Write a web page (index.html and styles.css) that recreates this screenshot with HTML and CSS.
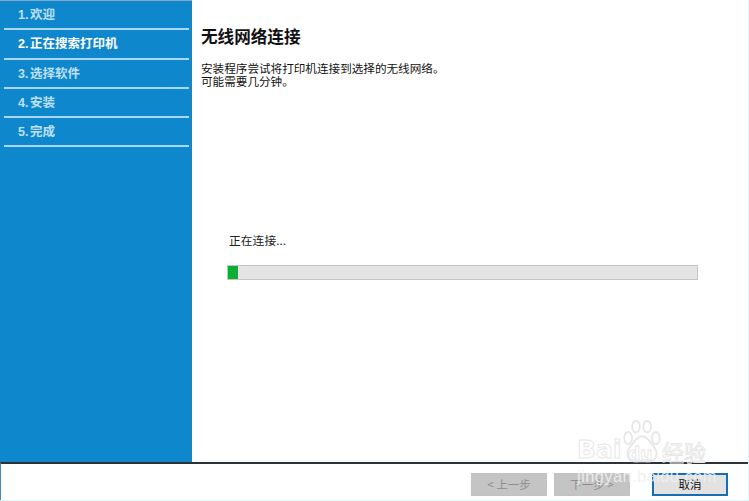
FILE: index.html
```html
<!DOCTYPE html>
<html lang="zh-CN">
<head>
<meta charset="utf-8">
<title>无线网络连接</title>
<link rel="stylesheet" href="styles.css">
</head>
<body>
<div class="window">
  <div class="main">
    <nav class="side">
      <div class="step">1. 欢迎</div>
      <div class="step current">2. 正在搜索打印机</div>
      <div class="step">3. 选择软件</div>
      <div class="step">4. 安装</div>
      <div class="step">5. 完成</div>
    </nav>
    <section class="content">
      <h1 class="title">无线网络连接</h1>
      <p class="desc">安装程序尝试将打印机连接到选择的无线网络。<br>可能需要几分钟。</p>
      <div class="status">正在连接...</div>
      <div class="bar"><div class="fill"></div></div>
    </section>
  </div>
  <footer class="foot">
    <button class="btn off">&lt; 上一步</button>
    <button class="btn off">下一步 &gt;</button>
    <button class="btn primary">取消</button>
  </footer>
  <div class="mark">
    <svg class="paw" width="38" height="44" viewBox="0 0 44 46" preserveAspectRatio="none" aria-hidden="true">
      <g fill="none" stroke="#e6e6e6" stroke-width="2">
        <ellipse cx="6" cy="19" rx="4.5" ry="6.5"/>
        <ellipse cx="15" cy="7" rx="4.5" ry="6"/>
        <ellipse cx="28" cy="7" rx="4.5" ry="6"/>
        <ellipse cx="38" cy="19" rx="4.5" ry="6.5"/>
        <path d="M22 17c-6 0-8 5-12 9-4 4-6 8-4 13 2 5 9 5 16 4 7 1 14 1 16-4 2-5 0-9-4-13-4-4-6-9-12-9z"/>
      </g>
    </svg>
    <span class="m-bai">Bai</span><span class="m-du">du</span><span class="m-cn">经验</span>
    <span class="m-url">jingyan.baidu.com</span>
  </div>
</div>
</body>
</html>
```
FILE: styles.css
```css
* { box-sizing: border-box; }
html, body { margin: 0; height: 100%; }
body { background: #fff; font-family: "Noto Sans CJK SC", "Liberation Sans", sans-serif; }
.window {
  position: relative;
  width: 749px;
  height: 501px;
  display: flex;
  flex-direction: column;
  overflow: hidden;
  border-right: 1px solid #dff6fb;
  border-bottom: 1px solid #dff6fb;
}
.main { flex: 1; display: flex; min-height: 0; }
.side {
  width: 192px;
  background: #0f87cd;
  border-top: 1px solid #7fa9c4;
  padding: 0 3px 0 4px;
  flex: none;
}
.step {
  height: 29.3px;
  padding: 6px 0 0 14px;
  border-bottom: 2px solid #a9d6f0;
  font-family: "Liberation Sans", "Noto Sans CJK SC", sans-serif;
  font-size: 12.5px;
  word-spacing: -2px;
  font-weight: 700;
  line-height: 16px;
  color: #bfe0f4;
}
.step.current { color: #fff; }
.content { flex: 1; padding: 25px 50px 0 9px; position: relative; display: flex; flex-direction: column; }
.title { margin: 0; font-size: 16.6px; font-weight: 700; line-height: 22px; color: #111; }
.desc { margin: 15px 0 0; font-size: 11.6px; line-height: 13px; color: #111; }
.status { margin: 144px 0 0 28px; font-size: 11.8px; line-height: 16px; color: #222; }
.bar {
  margin: 17px 0 0 26px;
  height: 15px;
  background: #e4e4e4;
  border: 1px solid #c4c4c4;
}
.fill { width: 10px; height: 100%; background: #0caf34; }
.foot {
  flex: none;
  height: 38px;
  border-top: 2px solid #2c3338;
  border-left: 1px solid #3a8ccb;
  display: flex;
  align-items: flex-start;
  padding: 9px 20px 0 470px;
  gap: 7px;
}
.btn {
  width: 76px;
  height: 23px;
  padding: 0;
  border: 1px solid #c2c2c2;
  background: #c4c4c4;
  color: #8d8d8d;
  font: 11.5px/1 "Noto Sans CJK SC", sans-serif;
}
.btn.primary {
  margin-left: 15px;
  background: #e2e2e2;
  color: #111;
  border: 2px solid #146fb4;
}
.mark { position: absolute; left: 570px; top: 418px; width: 145px; height: 70px; pointer-events: none; }
.paw { position: absolute; left: 53px; top: 2px; }
.m-bai, .m-du, .m-cn, .m-url { position: absolute; color: transparent; -webkit-text-stroke: 0.9px #e6e6e6; font-family: "DejaVu Sans", sans-serif; font-weight: 700; }
.m-bai { left: 7px; top: 17px; font-size: 25px; line-height: 30px; }
.m-du { left: 58px; top: 27px; font-size: 17px; line-height: 18px; }
.m-cn { left: 92px; top: 20px; font-size: 22px; line-height: 26px; font-weight: 400; font-family: "Noto Sans CJK SC", sans-serif; }
.m-url { left: 7px; top: 49px; font-size: 16.5px; line-height: 18px; font-weight: 400; font-family: "Liberation Sans", sans-serif; color: rgba(240,240,240,.9); -webkit-text-stroke: 0; letter-spacing: .4px; }
```
